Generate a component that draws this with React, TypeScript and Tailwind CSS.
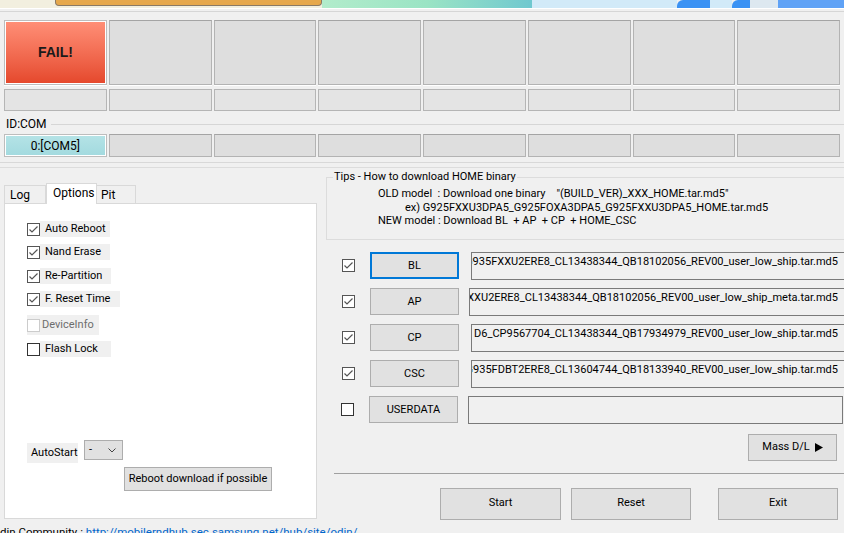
import React from "react";

function CheckBox({ checked, disabled }: { checked?: boolean; disabled?: boolean }) {
  const border = disabled ? "border-[#cccccc]" : checked ? "border-[#555555]" : "border-[#333333]";
  return (
    <div className={`w-[13px] h-[13px] shrink-0 border bg-white flex items-center justify-center ${border}`}>
      {checked && (
        <svg width="11" height="11" viewBox="0 0 11 11">
          <polyline points="1.5,5.5 4,8 9.5,2.5" fill="none" stroke="#555555" strokeWidth="1.2" />
        </svg>
      )}
    </div>
  );
}

function OptRow({ label, checked, mt, wCls }: { label: string; checked: boolean; mt: string; wCls: string }) {
  return (
    <div className={`flex items-center h-[16px] shrink-0 ${mt}`}>
      <CheckBox checked={checked} />
      <div className={`h-[16px] bg-[#f0f0f0] pl-[5px] leading-[16px] whitespace-nowrap ${wCls}`}>{label}</div>
    </div>
  );
}

const files = [
  { label: "BL", checked: true, focused: true, text: "G935FXXU2ERE8_CL13438344_QB18102056_REV00_user_low_ship.tar.md5", fml: "ml-[12px]", mt: "mt-[12px]", last: false },
  { label: "AP", checked: true, focused: false, text: "XXU2ERE8_CL13438344_QB18102056_REV00_user_low_ship_meta.tar.md5", fml: "ml-[10px]", mt: "mt-[8px]", last: false },
  { label: "CP", checked: true, focused: false, text: "D6_CP9567704_CL13438344_QB17934979_REV00_user_low_ship.tar.md5", fml: "ml-[12px]", mt: "mt-[8px]", last: false },
  { label: "CSC", checked: true, focused: false, text: "G935FDBT2ERE8_CL13604744_QB18133940_REV00_user_low_ship.tar.md5", fml: "ml-[12px]", mt: "mt-[8px]", last: false },
  { label: "USERDATA", checked: false, focused: false, text: "", fml: "ml-[10px]", mt: "mt-[8px]", last: true },
];

export default function App() {
  const boxes = [0, 1, 2, 3, 4, 5, 6, 7];
  return (
    <div className="w-[844px] h-[533px] overflow-hidden bg-[#f0f0f0] text-[11px] text-black font-['Roboto',sans-serif] flex flex-col">
      {/* banner */}
      <div className="h-[8px] flex shrink-0">
        <div className="w-[55px] bg-[#f2efdf]" />
        <div className="w-[267px] bg-[#f2efdf]">
          <div className="h-[6px] bg-[#e6a84c] rounded-b-[4px] border-b border-x border-[#8a7a66]" />
        </div>
        <div className="w-[210px] bg-gradient-to-r from-[#b2eccb] via-[#9ae4c4] to-[#6fc8cf]" />
        <div className="w-[145px] bg-[#d2eaf8]" />
        <div className="w-[33px] bg-[#3a92f4] rounded-tl-[6px]" />
        <div className="w-[22px] bg-[#d2eaf8]" />
        <div className="w-[18px] bg-[#3a92f4] rounded-tl-[6px]" />
        <div className="w-[28px] bg-[#dde8f0]" />
        <div className="flex-1 bg-[#5fa2f6]" />
      </div>
      <div className="h-[1px] bg-white shrink-0" />
      <div className="h-[2px] shrink-0" />
      <div className="h-[1px] bg-[#d6d6d6] shrink-0" />

      {/* status row 1 */}
      <div className="mt-[8px] px-[4px] grid grid-cols-8 gap-[2px] h-[65px] shrink-0">
        {boxes.map((i) =>
          i === 0 ? (
            <div key={i} className="border border-[#bdbdbd] bg-white p-[1px] shadow-[0_1px_0_#ffffff]">
              <div className="h-full bg-gradient-to-b from-[#ff8e76] to-[#e5482c] flex items-center justify-center">
                <span className="font-['Liberation_Sans',sans-serif] font-bold text-[14px] text-[#1a1a1a]">FAIL!</span>
              </div>
            </div>
          ) : (
            <div key={i} className="border border-[#b3b3b3] border-t-[#a4a4a4] bg-[#dedede] shadow-[0_1px_0_#ffffff]" />
          )
        )}
      </div>

      {/* status row 2 */}
      <div className="mt-[4px] px-[4px] grid grid-cols-8 gap-[2px] h-[22px] shrink-0">
        {boxes.map((i) => (
          <div key={i} className="border border-[#b5b5b5] bg-[#e4e4e4]" />
        ))}
      </div>

      {/* ID:COM */}
      <div className="mt-[5px] flex items-center h-[16px] shrink-0 pl-[6px]">
        <span className="leading-[16px] text-[12px]">ID:COM</span>
        <div className="flex-1 h-[1px] bg-[#d6d6d6] ml-[4px]" />
      </div>

      <div className="mt-[2px] px-[4px] grid grid-cols-8 gap-[2px] h-[23px] shrink-0">
        {boxes.map((i) =>
          i === 0 ? (
            <div key={i} className="border border-[#bdbdbd] bg-white p-[1px]">
              <div className="h-full bg-gradient-to-b from-[#b4e3e6] to-[#a3dadf] flex items-center justify-center leading-[16px] text-[12px]">
                0:[COM5]
              </div>
            </div>
          ) : (
            <div key={i} className="border border-[#b3b3b3] border-t-[#a4a4a4] bg-[#dedede]" />
          )
        )}
      </div>

      <div className="mt-[5px] h-[1px] bg-[#d8d8d8] shrink-0" />
      <div className="mt-[4px] h-[1px] bg-[#dcdcdc] shrink-0" />

      {/* bottom section */}
      <div className="flex shrink-0">
        {/* left */}
        <div className="w-[317px] pl-[4px] shrink-0 flex flex-col">
          <div className="mt-[15px] flex items-end h-[20px] shrink-0 relative z-10">
            <div className="w-[42px] h-[18px] border border-b-0 border-[#d9d9d9] bg-[#f0f0f0] pl-[5px] leading-[18px] text-[12px]">Log</div>
            <div className="w-[51px] h-[21px] -mb-[1px] border border-b-0 border-[#d9d9d9] bg-white pl-[6px] leading-[18px] text-[12px]">Options</div>
            <div className="w-[39px] h-[18px] border border-b-0 border-l-0 border-[#d9d9d9] bg-[#f0f0f0] pl-[4px] leading-[18px] text-[12px]">Pit</div>
          </div>
          <div className="h-[316px] shrink-0 border border-[#d9d9d9] bg-white pl-[22px] flex flex-col">
            <OptRow label="Auto Reboot" checked mt="mt-[17px]" wCls="w-[70px]" />
            <OptRow label="Nand Erase" checked mt="mt-[7px]" wCls="w-[70px]" />
            <OptRow label="Re-Partition" checked mt="mt-[8px]" wCls="w-[71px]" />
            <OptRow label="F. Reset Time" checked mt="mt-[7px]" wCls="w-[80px]" />
            <div className="mt-[8px] h-[20px] w-[72px] shrink-0 bg-[#f0f0f0] flex items-center">
              <CheckBox disabled />
              <span className="ml-[2px] text-[#6d6d6d] leading-[16px] whitespace-nowrap">DeviceInfo</span>
            </div>
            <OptRow label="Flash Lock" checked={false} mt="mt-[6px]" wCls="w-[71px]" />

            <div className="mt-[83px] flex items-start shrink-0">
              <div className="mt-[3px] h-[20px] w-[51px] bg-[#f0f0f0] pl-[4px] leading-[20px] whitespace-nowrap">AutoStart</div>
              <div className="ml-[6px] w-[39px] h-[20px] border border-[#adadad] bg-[#e1e1e1] flex items-center justify-between pl-[4px] pr-[6px]">
                <span className="leading-[16px]">-</span>
                <svg width="8" height="5" viewBox="0 0 8 5">
                  <polyline points="0.5,0.5 4,4 7.5,0.5" fill="none" stroke="#444444" strokeWidth="1" />
                </svg>
              </div>
            </div>
            <div className="mt-[4px] ml-[97px] w-[148px] h-[24px] shrink-0 border border-[#adadad] bg-[#e1e1e1] flex items-center justify-center leading-[16px] whitespace-nowrap">
              Reboot download if possible
            </div>
          </div>
          <div className="mt-[5px] -ml-[12px] whitespace-nowrap leading-[16px] text-[11.5px] shrink-0">
            Odin Community : <span className="text-[#0066cc]">http://mobilerndhub.sec.samsung.net/hub/site/odin/</span>
          </div>
        </div>

        {/* right */}
        <div className="ml-[9px] flex-1 flex flex-col min-w-0">
          <fieldset className="mt-[1px] -mr-[6px] border border-[#dcdcdc] pb-[11px]">
            <legend className="ml-[6px] px-[1px] leading-[16px]">Tips - How to download HOME binary</legend>
            <div className="whitespace-pre leading-[13.5px] mt-[2px] ml-[51px]">OLD model  : Download one binary    "(BUILD_VER)_XXX_HOME.tar.md5"</div>
            <div className="whitespace-pre leading-[13.5px] ml-[78px]">ex) G925FXXU3DPA5_G925FOXA3DPA5_G925FXXU3DPA5_HOME.tar.md5</div>
            <div className="whitespace-pre leading-[13.5px] ml-[51px]">NEW model : Download BL  + AP  + CP  + HOME_CSC</div>
          </fieldset>

          {files.map((f) => (
            <div key={f.label} className={`flex items-center h-[28px] ${f.mt}`}>
              <div className={f.last ? "ml-[15px]" : "ml-[16px]"}>
                <CheckBox checked={f.checked} />
              </div>
              <div
                className={`ml-[15px] w-[89px] h-[27px] shrink-0 flex items-center justify-center bg-[#e1e1e1] leading-[16px] ${
                  f.focused ? "border-2 border-[#0078d7]" : "border border-[#adadad]"
                }`}
              >
                {f.label}
              </div>
              <div
                className={`${f.fml} h-[28px] flex-1 min-w-0 border border-[#7a7a7a] bg-[#f0f0f0] overflow-hidden flex justify-end ${
                  f.last ? "mr-[1px]" : "-mr-[6px] pr-[11px]"
                }`}
              >
                <span className="whitespace-nowrap leading-[16px] shrink-0 pt-[1px]">{f.text}</span>
              </div>
            </div>
          ))}

          <div className="mt-[10px] self-end mr-[7px] w-[89px] h-[27px] border border-[#adadad] bg-[#e1e1e1] flex items-center justify-center gap-[5px] leading-[16px]">
            <span>Mass D/L</span>
            <svg width="8" height="9" viewBox="0 0 8 9">
              <polygon points="0,0 8,4.5 0,9" fill="#000000" />
            </svg>
          </div>

          <div className="mt-[12px] ml-[8px] h-[1px] bg-[#a0a0a0]" />

          <div className="mt-[14px] flex">
            <div className="ml-[114px] w-[121px] h-[32px] border border-[#adadad] bg-[#e1e1e1] flex items-center justify-center">Start</div>
            <div className="ml-[10px] w-[120px] h-[32px] border border-[#adadad] bg-[#e1e1e1] flex items-center justify-center">Reset</div>
            <div className="ml-[27px] w-[120px] h-[32px] border border-[#adadad] bg-[#e1e1e1] flex items-center justify-center">Exit</div>
          </div>
        </div>
      </div>
    </div>
  );
}
